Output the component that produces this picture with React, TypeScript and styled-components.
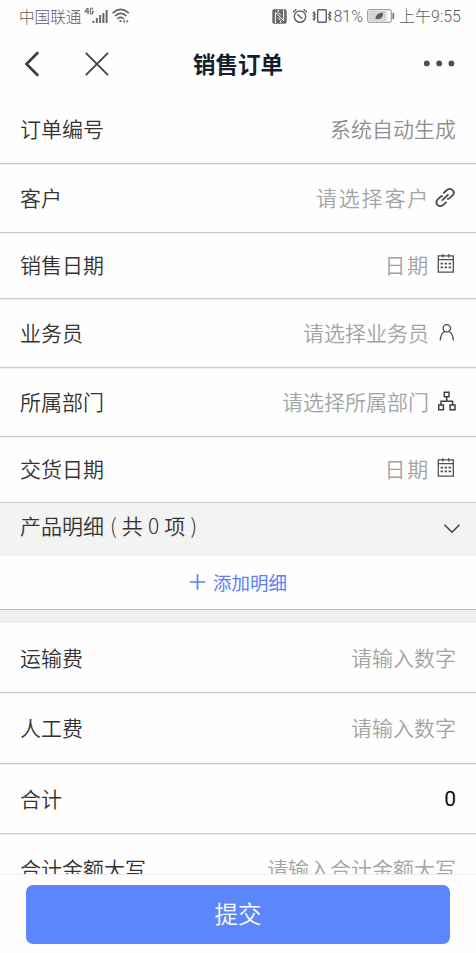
import React from "react";
import styled, { createGlobalStyle } from "styled-components";

const GlobalStyle = createGlobalStyle`
  *, *::before, *::after { box-sizing: border-box; }
  body {
    margin: 0;
    background: #fefefe;
    font-family: "Noto Sans CJK SC", sans-serif;
    font-weight: 350;
    color: #333;
  }
`;

const Screen = styled.div`
  width: 476px;
  height: 953px;
  display: flex;
  flex-direction: column;
  overflow: hidden;
  background: #fefefe;
`;

const StatusBar = styled.header`
  flex: none;
  height: 32px;
  padding: 0 15px 0 19px;
  display: flex;
  justify-content: space-between;
  align-items: center;
  font-weight: 300;
  color: #5c5c5c;
`;

const StatusGroup = styled.div`
  display: flex;
  align-items: center;
  height: 32px;
  svg { flex: none; display: block; }
`;

const StatusText = styled.span<{ $latin?: boolean; $gap?: number }>`
  font-family: ${(p) => (p.$latin ? 'Roboto, "Noto Sans CJK SC", sans-serif' : "inherit")};
  font-size: ${(p) => (p.$latin ? "16px" : "15.6px")};
  line-height: 20px;
  margin-left: ${(p) => p.$gap ?? 0}px;
  padding-top: ${(p) => (p.$latin ? 1 : 0)}px;
  white-space: nowrap;
`;

const NavBar = styled.nav`
  flex: none;
  height: 63px;
  padding: 0 20px 0 22px;
  display: grid;
  grid-template-columns: 1fr auto 1fr;
  align-items: center;
`;

const NavActions = styled.div<{ $end?: boolean }>`
  display: flex;
  justify-content: ${(p) => (p.$end ? "flex-end" : "flex-start")};
  gap: 44px;
  svg { display: block; }
`;

const NavTitle = styled.h1`
  margin: 0 2px 2px 0;
  font-size: 22.5px;
  line-height: 30px;
  font-weight: 700;
  color: #141e2a;
`;

const Form = styled.main`
  flex: 1;
  min-height: 0;
  overflow: hidden;
`;

const Row = styled.div<{ $height: number; $lift: number }>`
  height: ${(p) => p.$height}px;
  padding: 0 20px ${(p) => p.$lift}px;
  display: flex;
  align-items: center;
  justify-content: space-between;
  border-bottom: 1px solid #c9c9c9;
  box-shadow: 0 1px 0 #efefef;
`;

const Label = styled.span`
  font-size: 21px;
  line-height: 30px;
  color: #333;
  white-space: pre;
`;

const Field = styled.div`
  display: flex;
  align-items: center;
  svg { flex: none; display: block; }
`;

const Value = styled.span<{ $tone: "auto" | "hint" | "total"; $spaced?: boolean; $gap?: number }>`
  font-size: 21px;
  line-height: 30px;
  font-family: ${(p) => (p.$tone === "total" ? "Roboto, sans-serif" : "inherit")};
  font-weight: ${(p) => (p.$tone === "total" ? 400 : "inherit")};
  padding-top: ${(p) => (p.$tone === "total" ? 2 : 0)}px;
  letter-spacing: ${(p) => (p.$spaced ? "1.8px" : "0")};
  margin-right: ${(p) => p.$gap ?? 0}px;
  color: ${(p) => ({ auto: "#8e8e8e", hint: "#a3a3a3", total: "#0a0a0a" })[p.$tone]};
`;

const SectionHeader = styled.div`
  height: 53px;
  padding: 0 15px 9px 20px;
  display: flex;
  align-items: center;
  justify-content: space-between;
  background: #f3f3f3;
  svg { margin-top: 7px; }
`;

const SectionCount = styled.span`
  margin-left: 6px;
  font-weight: 350;
  word-spacing: 0.5px;
`;

const Thin = styled.span`
  font-weight: 300;
`;

const AddButton = styled.button`
  width: 100%;
  height: 54px;
  padding: 0 0 1px;
  border: 0;
  border-bottom: 1px solid #bcbcbc;
  background: transparent;
  display: flex;
  align-items: center;
  justify-content: center;
  gap: 7px;
  font: 400 18.5px/26px "Noto Sans CJK SC", sans-serif;
  color: #5a80f5;
`;

const Divider = styled.div`
  height: 13px;
  background: #efefef;
`;

const Footer = styled.footer`
  flex: none;
  height: 79px;
  padding: 10px 26px 0;
  border-top: 1px solid #eee;
  background: #fefefe;
`;

const SubmitButton = styled.button`
  display: block;
  width: 424px;
  height: 59px;
  padding: 0 0 3px;
  border: 0;
  border-radius: 7px;
  background: #5c86fb;
  color: #fff;
  font: 350 23.5px/56px "Noto Sans CJK SC", sans-serif;
`;

const SignalIcon = () => (
  <svg width="24" height="20" viewBox="0 0 24 20" fill="none" stroke="#626262">
    <path d="M3.5 2 1 5.8h4M4 2v6.5M9 3.4Q8.5 2 7.3 2 6.2 2 6.2 5T7.4 8Q9 8 9 5.3H7.6" strokeWidth="1.1" />
    <path d="M9.4 17v-2.3M12.8 17v-5M16.2 17V9M19.4 17V7M22.6 17V4" strokeWidth="1.9" />
  </svg>
);

const WifiIcon = () => (
  <svg width="18" height="16" viewBox="0 0 18 16" fill="none" stroke="#626262" strokeWidth="1.6" strokeLinecap="round">
    <path d="M1.2 4.7Q8.7-1.8 16.2 4.7M3.5 7.6q5.2-4.4 10.4 0M5.8 10.5q2.9-2.4 5.7 0" />
    <circle cx="8.4" cy="13.2" r="1.1" fill="#626262" stroke="none" />
    <path d="m12.8 11.5-2 1.7 2 1.7zM14.6 11.5l2 1.7-2 1.7z" fill="#626262" stroke="none" />
  </svg>
);

const NfcIcon = () => (
  <svg width="15" height="15" viewBox="0 0 15 15">
    <rect x=".3" y=".3" width="14.4" height="14.4" rx="1.6" fill="#6a6a6a" />
    <path d="M3.4 14V3.4l8.2 8.2V1M6.2 1v2.4l2.8 3M8.8 14v-2.4L6 8.6" stroke="#fff" strokeWidth="1" fill="none" />
  </svg>
);

const AlarmIcon = () => (
  <svg width="16" height="16" viewBox="0 0 16 16" fill="none" stroke="#656565" strokeWidth="1.5">
    <circle cx="8" cy="8.6" r="5.7" />
    <path d="M1 4.2 4.4 1.3M15 4.2l-3.4-2.9M5.3 6.4l2.7 2.4 2.2 2" />
  </svg>
);

const VibrateIcon = () => (
  <svg width="20" height="16" viewBox="0 0 20 16" fill="none" stroke="#606060" strokeWidth="1.4">
    <rect x="5.7" y="1.7" width="8.6" height="12.6" rx=".8" />
    <path d="M2.7 3.5 1.4 5l1.8 1.5L1.4 8l1.8 1.5-1.8 1.6 1.3 1.4M17.3 3.5 18.6 5l-1.8 1.5L18.6 8l-1.8 1.5 1.8 1.6-1.3 1.4" strokeWidth="1.5" />
  </svg>
);

const BatteryIcon = () => (
  <svg width="28" height="14" viewBox="0 0 28 14">
    <rect x=".7" y=".7" width="23.6" height="12.6" rx="1.5" fill="#f5f5f5" stroke="#8a8a8a" />
    <rect x="2" y="2" width="17.5" height="10" fill="#d5d5d5" />
    <path d="M8.6 10.6Q8 4.4 16 3.6 16.3 11 9.8 9.8l-.8.8z" fill="#555" />
    <path d="m9.5 9.8 4-3.8" stroke="#999" strokeWidth=".5" />
    <path d="M26.3 4v6" stroke="#777" strokeWidth="1.8" />
  </svg>
);

const BackIcon = () => (
  <svg width="18" height="26" viewBox="0 0 18 26" fill="none" stroke="#344151" strokeWidth="2.7">
    <path d="M16.2 1.3 4.5 13l11.7 11.7" />
  </svg>
);

const CloseIcon = () => (
  <svg width="26" height="26" viewBox="0 0 26 26" fill="none" stroke="#3d4651" strokeWidth="1.9">
    <path d="m1.8 1.8 22.2 22.4M24 1.8 1.8 24.2" />
  </svg>
);

const MoreIcon = () => (
  <svg width="34" height="8" viewBox="0 0 34 8" fill="#47505a">
    <circle cx="4.8" cy="3.4" r="2.9" />
    <circle cx="17.2" cy="3.4" r="2.9" />
    <circle cx="29.4" cy="3.4" r="2.9" />
  </svg>
);

const LinkIcon = () => (
  <svg width="21" height="20" viewBox="0 0 21 20" fill="none" stroke="#4a4a4a" strokeWidth="1.8" strokeLinecap="round">
    <path d="M8.9 5.7 12 3Q15 .6 17.6 3.1T17.6 8.4L14.6 11.1Q13.7 11.8 12.8 11.9" />
    <path d="M11 15.3 8.2 17.9Q5.2 20.4 2.6 17.9T2.6 12.6L5.4 9.9Q6.2 9.2 7.2 9.1" />
    <path d="m7.4 13.2 5.5-5.4" />
  </svg>
);

const CalendarIcon = () => (
  <svg width="19" height="20" viewBox="0 0 19 20" fill="none" stroke="#505050" strokeWidth="1.3">
    <path d="M1.3 1.9h15v16.3H1.3zM1.3 5.7h15M5.8 0v3.6M11.8 0v3.6" />
    <path d="M3.6 9.6h10.4M3.6 13.4h10.4" strokeWidth="1.8" strokeDasharray="2.4 1.6" />
  </svg>
);

const PersonIcon = () => (
  <svg width="18" height="19" viewBox="0 0 18 19" fill="none" stroke="#424242" strokeWidth="1.25">
    <circle cx="8.8" cy="5.2" r="3.7" />
    <path d="M2.2 17.4q.3-6.7 4.6-9.1M15.4 17.4q-.3-6.7-4.6-9.1" />
  </svg>
);

const OrgIcon = () => (
  <svg width="19" height="20" viewBox="0 0 19 20" fill="none" stroke="#404040" strokeWidth="1.5">
    <path d="M7.3 1.2h4.7v4.5H7.3zM1.7 13.9h4.7v4.9H1.7zM13.1 13.9H18v4.9h-4.9zM9.7 5.7v4.6M4 13.9v-3.6h11.6v3.6" />
  </svg>
);

const ChevronIcon = () => (
  <svg width="18" height="12" viewBox="0 0 18 12" fill="none" stroke="#404040" strokeWidth="1.5">
    <path d="m1.5 1.7 7.5 7.6 7.5-7.6" />
  </svg>
);

const PlusIcon = () => (
  <svg width="17" height="17" viewBox="0 0 17 17" fill="none" stroke="#5a80f5" strokeWidth="1.7">
    <path d="M8.5.2v15.6M.7 8h15.6" />
  </svg>
);

type RowData = {
  label: string;
  value: string;
  height: number;
  lift?: number;
  tone?: "auto" | "hint" | "total";
  spaced?: boolean;
  gap?: number;
  icon?: React.ReactNode;
};

const orderRows: RowData[] = [
  { label: "订单编号", value: "系统自动生成", height: 69, tone: "auto" },
  { label: "客户", value: "请选择客户", height: 69, spaced: true, gap: 5, icon: <LinkIcon /> },
  { label: "销售日期", value: "日期", height: 66, lift: 4, spaced: true, gap: 7, icon: <CalendarIcon /> },
  { label: "业务员", value: "请选择业务员", height: 69, gap: 9, icon: <PersonIcon /> },
  { label: "所属部门", value: "请选择所属部门", height: 69, gap: 8, icon: <OrgIcon /> },
  { label: "交货日期", value: "日期", height: 66, lift: 4, spaced: true, gap: 7, icon: <CalendarIcon /> },
];

const feeRows: RowData[] = [
  { label: "运输费", value: "请输入数字", height: 70, lift: 1 },
  { label: "人工费", value: "请输入数字", height: 71 },
  { label: "合计", value: "0", height: 70, lift: 1, tone: "total" },
  { label: "合计金额大写", value: "请输入合计金额大写", height: 70 },
];

const FormRow = ({ label, value, height, lift = 2, tone = "hint", spaced, gap, icon }: RowData) => (
  <Row $height={height} $lift={lift}>
    <Label>{label}</Label>
    <Field>
      <Value $tone={tone} $spaced={spaced} $gap={gap}>{value}</Value>
      {icon}
    </Field>
  </Row>
);

export default function App() {
  return (
    <Screen>
      <GlobalStyle />
      <StatusBar>
        <StatusGroup>
          <StatusText>中国联通</StatusText>
          <StatusText $gap={3}><SignalIcon /></StatusText>
          <StatusText $gap={4}><WifiIcon /></StatusText>
        </StatusGroup>
        <StatusGroup>
          <NfcIcon />
          <StatusText $gap={5}><AlarmIcon /></StatusText>
          <StatusText $gap={4}><VibrateIcon /></StatusText>
          <StatusText $latin $gap={1}>81%</StatusText>
          <StatusText $gap={4}><BatteryIcon /></StatusText>
          <StatusText $latin $gap={4}>上午9:55</StatusText>
        </StatusGroup>
      </StatusBar>
      <NavBar>
        <NavActions>
          <BackIcon />
          <CloseIcon />
        </NavActions>
        <NavTitle>销售订单</NavTitle>
        <NavActions $end>
          <MoreIcon />
        </NavActions>
      </NavBar>
      <Form>
        {orderRows.map((row) => <FormRow key={row.label} {...row} />)}
        <SectionHeader>
          <Label>
            产品明细
            <SectionCount><Thin>( </Thin>共<Thin> 0 </Thin>项<Thin> )</Thin></SectionCount>
          </Label>
          <ChevronIcon />
        </SectionHeader>
        <AddButton><PlusIcon />添加明细</AddButton>
        <Divider />
        {feeRows.map((row) => <FormRow key={row.label} {...row} />)}
      </Form>
      <Footer>
        <SubmitButton>提交</SubmitButton>
      </Footer>
    </Screen>
  );
}
